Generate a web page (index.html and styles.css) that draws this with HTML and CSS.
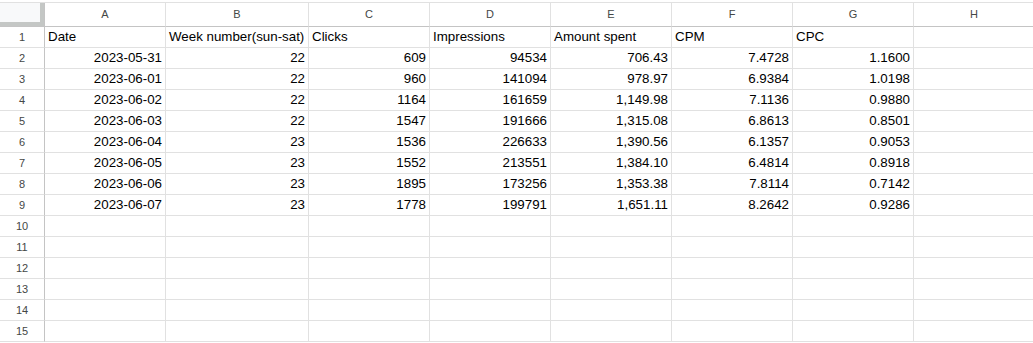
FILE: index.html
```html
<!DOCTYPE html>
<html>
<head>
<meta charset="utf-8">
<link rel="stylesheet" href="styles.css">
</head>
<body>
<div class="sheet">
  <div class="row">
    <div class="corner"></div>
    <div class="colhead">A</div><div class="colhead">B</div><div class="colhead">C</div><div class="colhead">D</div><div class="colhead">E</div><div class="colhead">F</div><div class="colhead">G</div><div class="colhead">H</div>
  </div>
  <div class="row">
    <div class="rowhead">1</div>
    <div class="cell">Date</div><div class="cell">Week number(sun-sat)</div><div class="cell">Clicks</div><div class="cell">Impressions</div><div class="cell">Amount spent</div><div class="cell">CPM</div><div class="cell">CPC</div><div class="cell"></div>
  </div>
  <div class="row">
    <div class="rowhead">2</div>
    <div class="cell num">2023-05-31</div><div class="cell num">22</div><div class="cell num">609</div><div class="cell num">94534</div><div class="cell num">706.43</div><div class="cell num">7.4728</div><div class="cell num">1.1600</div><div class="cell"></div>
  </div>
  <div class="row">
    <div class="rowhead">3</div>
    <div class="cell num">2023-06-01</div><div class="cell num">22</div><div class="cell num">960</div><div class="cell num">141094</div><div class="cell num">978.97</div><div class="cell num">6.9384</div><div class="cell num">1.0198</div><div class="cell"></div>
  </div>
  <div class="row">
    <div class="rowhead">4</div>
    <div class="cell num">2023-06-02</div><div class="cell num">22</div><div class="cell num">1164</div><div class="cell num">161659</div><div class="cell num">1,149.98</div><div class="cell num">7.1136</div><div class="cell num">0.9880</div><div class="cell"></div>
  </div>
  <div class="row">
    <div class="rowhead">5</div>
    <div class="cell num">2023-06-03</div><div class="cell num">22</div><div class="cell num">1547</div><div class="cell num">191666</div><div class="cell num">1,315.08</div><div class="cell num">6.8613</div><div class="cell num">0.8501</div><div class="cell"></div>
  </div>
  <div class="row">
    <div class="rowhead">6</div>
    <div class="cell num">2023-06-04</div><div class="cell num">23</div><div class="cell num">1536</div><div class="cell num">226633</div><div class="cell num">1,390.56</div><div class="cell num">6.1357</div><div class="cell num">0.9053</div><div class="cell"></div>
  </div>
  <div class="row">
    <div class="rowhead">7</div>
    <div class="cell num">2023-06-05</div><div class="cell num">23</div><div class="cell num">1552</div><div class="cell num">213551</div><div class="cell num">1,384.10</div><div class="cell num">6.4814</div><div class="cell num">0.8918</div><div class="cell"></div>
  </div>
  <div class="row">
    <div class="rowhead">8</div>
    <div class="cell num">2023-06-06</div><div class="cell num">23</div><div class="cell num">1895</div><div class="cell num">173256</div><div class="cell num">1,353.38</div><div class="cell num">7.8114</div><div class="cell num">0.7142</div><div class="cell"></div>
  </div>
  <div class="row">
    <div class="rowhead">9</div>
    <div class="cell num">2023-06-07</div><div class="cell num">23</div><div class="cell num">1778</div><div class="cell num">199791</div><div class="cell num">1,651.11</div><div class="cell num">8.2642</div><div class="cell num">0.9286</div><div class="cell"></div>
  </div>
  <div class="row">
    <div class="rowhead">10</div>
    <div class="cell"></div><div class="cell"></div><div class="cell"></div><div class="cell"></div><div class="cell"></div><div class="cell"></div><div class="cell"></div><div class="cell"></div>
  </div>
  <div class="row">
    <div class="rowhead">11</div>
    <div class="cell"></div><div class="cell"></div><div class="cell"></div><div class="cell"></div><div class="cell"></div><div class="cell"></div><div class="cell"></div><div class="cell"></div>
  </div>
  <div class="row">
    <div class="rowhead">12</div>
    <div class="cell"></div><div class="cell"></div><div class="cell"></div><div class="cell"></div><div class="cell"></div><div class="cell"></div><div class="cell"></div><div class="cell"></div>
  </div>
  <div class="row">
    <div class="rowhead">13</div>
    <div class="cell"></div><div class="cell"></div><div class="cell"></div><div class="cell"></div><div class="cell"></div><div class="cell"></div><div class="cell"></div><div class="cell"></div>
  </div>
  <div class="row">
    <div class="rowhead">14</div>
    <div class="cell"></div><div class="cell"></div><div class="cell"></div><div class="cell"></div><div class="cell"></div><div class="cell"></div><div class="cell"></div><div class="cell"></div>
  </div>
  <div class="row">
    <div class="rowhead">15</div>
    <div class="cell"></div><div class="cell"></div><div class="cell"></div><div class="cell"></div><div class="cell"></div><div class="cell"></div><div class="cell"></div><div class="cell"></div>
  </div>
</div>
</body>
</html>
```
FILE: styles.css
```css
html, body {
  margin: 0;
  padding: 0;
  background: #ffffff;
  overflow: hidden;
}

.sheet {
  margin-top: 2px;
  border-top: 1px solid #e1e1e1;
  display: grid;
  grid-template-columns: 45px 121px 143px 121px 121px 121px 121px 121px 121px;
  grid-auto-rows: 21px;
  width: 1035px;
  font-family: "Liberation Sans", Arial, sans-serif;
}

.row {
  display: contents;
}

.row:first-child > div {
  height: 24px;
}

.sheet {
  grid-template-rows: 24px;
}

.corner {
  box-sizing: border-box;
  background: #f8f9fa;
  border-right: 1px solid #c4c4c4;
  border-bottom: 1px solid #c4c4c4;
  box-shadow: inset -4px -4px 0 #c4c7c5;
}

.colhead {
  box-sizing: border-box;
  border-right: 1px solid #e1e1e1;
  border-bottom: 1px solid #c4c4c4;
  text-align: center;
  font-size: 11px;
  line-height: 23px;
  color: #444746;
}

.rowhead {
  box-sizing: border-box;
  border-right: 1px solid #c4c4c4;
  border-bottom: 1px solid #e1e1e1;
  text-align: center;
  font-size: 11px;
  line-height: 20px;
  color: #444746;
}

.cell {
  box-sizing: border-box;
  border-right: 1px solid #e1e1e1;
  border-bottom: 1px solid #e1e1e1;
  padding: 0 3px;
  font-size: 10pt;
  line-height: 20px;
  color: #000000;
  white-space: nowrap;
  overflow: hidden;
}

.num {
  text-align: right;
}
```
